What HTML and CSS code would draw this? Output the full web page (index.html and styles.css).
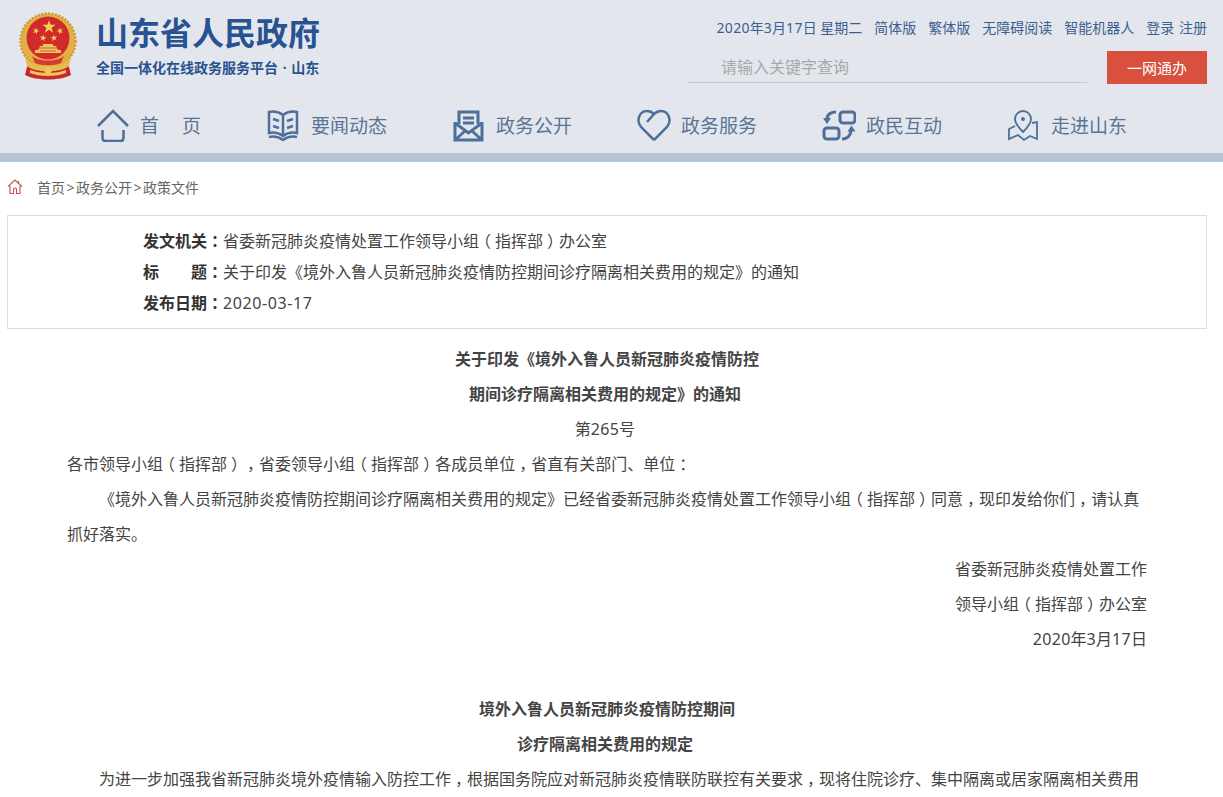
FILE: index.html
```html
<!DOCTYPE html>
<html>
<head>
    <meta charset="utf-8">
    <title>山东省人民政府</title>
    <link rel="stylesheet" href="styles.css">
</head>
<body>
    <div class="header">
        <div class="top">
            <div class="logo">
                <svg class="emblem" width="64" height="70" viewBox="0 0 64 70">
                    <defs>
                        <path id="star" d="M0-1 .224-.309H.951L.363.118 .588.809 0 .382-.588.809-.363.118-.951-.309H-.224Z"/>
                    </defs>
                    <path d="M12 52C20 60 44 60 52 52L55 64C44 70 20 70 9 64Z" fill="#c8282c"/>
                    <circle cx="32" cy="30" r="27.500" fill="#e2b044" stroke="#cf9a34" stroke-width="2.500" stroke-dasharray="2 1.500"/>
                    <circle cx="32" cy="27" r="21.500" fill="#d02a2c"/>
                    <g fill="#f6d25c">
                        <use href="#star" transform="translate(33 16) scale(7)"/>
                        <use href="#star" transform="translate(20 20) rotate(20) scale(3.500)"/>
                        <use href="#star" transform="translate(44 20) rotate(-20) scale(3.500)"/>
                        <use href="#star" transform="translate(27 27) rotate(10) scale(3.500)"/>
                        <use href="#star" transform="translate(38 27) rotate(-10) scale(3.500)"/>
                    </g>
                    <path d="M27 33h10v2h3l2 4h3v3H19v-3h3l2-4h3z" fill="#efc65e"/>
                    <path d="M22 37h20M24 40h16" stroke="#c8282c" stroke-width=".7"/>
                    <path d="M9 46c6 12 40 12 46 0l-2 9c-8 7-34 7-42 0z" fill="#e8bb4e"/>
                    <path d="M16 45c6 6 26 6 32 0l-3 7c-6 3-20 3-26 0z" fill="#d9383a"/>
                    <path d="M14 59c10 4 26 4 36 0v3c-10 4-26 4-36 0z" fill="#efc65e"/>
                    <circle cx="32" cy="60" r="3.500" fill="#efc65e"/>
                </svg>
                <div class="logo-text">
                    <div class="site-name">山东省人民政府</div>
                    <div class="site-sub">全国一体化在线政务服务平台 · 山东</div>
                </div>
            </div>
            <div class="top-right">
                <div class="top-links">
                    <span><span class="num">2020</span>年<span class="num">3</span>月<span class="num">17</span>日 星期二</span>
                    <a>简体版</a>
                    <a>繁体版</a>
                    <a>无障碍阅读</a>
                    <a>智能机器人</a>
                    <span class="login"><a>登录</a> <a>注册</a></span>
                </div>
                <div class="search-row">
                    <div class="search">请输入关键字查询</div>
                    <a class="search-btn">一网通办</a>
                </div>
            </div>
        </div>
        <div class="nav">
            <a class="nav-item first">
                <svg width="34" height="34" viewBox="0 0 34 34"><path d="M2 18L17 3l15 15M6.500 22v8q0 3 3 3h15q3 0 3-3v-8"/></svg>
                <span class="nav-spread"><i>首</i><i>页</i></span>
            </a>
            <a class="nav-item">
                <svg width="34" height="34" viewBox="0 0 34 34"><path d="M16 7C12 4 7 3 2 4v21c5-1 10 0 14 3 4-3 9-4 14-3V4C25 3 20 4 16 7zM16 7v21M6 11l6 2M6 18l6 2M26 11l-6 2M26 18l-6 2M2 29c5-1 10 0 14 3 4-3 9-4 14-3"/></svg>
                <span>要闻动态</span>
            </a>
            <a class="nav-item">
                <svg width="34" height="34" viewBox="0 0 34 34"><path class="thick" d="M7 16V4h19v12M11 10h11M11 15h11M3 14v18h27V14M3 15l13.500 10L30 15M3 32l10-9M30 32l-10-9"/></svg>
                <span>政务公开</span>
            </a>
            <a class="nav-item">
                <svg width="34" height="34" viewBox="0 0 34 34"><path d="M17 32L4 19C-1 13 2 3 10 3c3 0 5 1 7 3l-7 8M17 6c2-2 4-3 7-3 8 0 11 10 6 16L17 32"/></svg>
                <span>政务服务</span>
            </a>
            <a class="nav-item">
                <svg width="34" height="34" viewBox="0 0 34 34">
                    <rect class="thick" x="18" y="4" width="15" height="11" rx="3"/>
                    <rect class="thick" x="2" y="20" width="15" height="11" rx="3"/>
                    <path class="thick" d="M14 4C9 4 6 6 5 10M20 31c5 0 8-2 9-8"/>
                    <path class="solid" d="M1 10h8l-4 6zM25.500 23.500h8l-4-6z"/>
                </svg>
                <span>政民互动</span>
            </a>
            <a class="nav-item">
                <svg width="34" height="34" viewBox="0 0 34 34"><path class="thin" d="M16 24c-5-5-8-9-8-13a8 8 0 0 1 16 0c0 4-3 8-8 13zM8 18l-6 3v10l9-4 6 5 6-4 7 3V14l-5 1"/><circle cx="16" cy="11" r="2" class="solid"/></svg>
                <span>走进山东</span>
            </a>
        </div>
    </div>

    <div class="crumbs">
        <svg width="16" height="16" viewBox="0 0 16 16"><path d="M1 7.500L8 1l7 6.500M11.500 4V2M3 7v7.500h3.500V10.500a1.500 1.500 0 0 1 3 0v4H13V7"/></svg>
        <span>首页<span class="sep">&gt;</span>政务公开<span class="sep">&gt;</span>政策文件</span>
    </div>

    <div class="meta">
        <div class="meta-row"><b>发文机关<span class="pn">：</span></b>省委新冠肺炎疫情处置工作领导小组<span class="pn">（</span>指挥部<span class="pn">）</span>办公室</div>
        <div class="meta-row"><b class="spread"><i>标</i><i>题<span class="pn">：</span></i></b>关于印发《境外入鲁人员新冠肺炎疫情防控期间诊疗隔离相关费用的规定》的通知</div>
        <div class="meta-row"><b>发布日期<span class="pn">：</span></b><span class="meta-date">2020-03-17</span></div>
    </div>

    <div class="article">
        <p class="center"><b>关于印发《境外入鲁人员新冠肺炎疫情防控</b></p>
        <p class="center"><b>期间诊疗隔离相关费用的规定》的通知</b>&nbsp;</p>
        <p class="center">第<span class="num">265</span>号&nbsp;</p>
        <p>各市领导小组<span class="pn">（</span>指挥部<span class="pn">）</span><span class="pn">，</span>省委领导小组<span class="pn">（</span>指挥部<span class="pn">）</span>各成员单位<span class="pn">，</span>省直有关部门、单位<span class="pn">：</span></p>
        <p class="indent">《境外入鲁人员新冠肺炎疫情防控期间诊疗隔离相关费用的规定》已经省委新冠肺炎疫情处置工作领导小组<span class="pn">（</span>指挥部<span class="pn">）</span>同意<span class="pn">，</span>现印发给你们<span class="pn">，</span>请认真<br>抓好落实。</p>
        <p class="right">省委新冠肺炎疫情处置工作</p>
        <p class="right">领导小组<span class="pn">（</span>指挥部<span class="pn">）</span>办公室</p>
        <p class="right"><span class="num">2020</span>年<span class="num">3</span>月<span class="num">17</span>日</p>
        <p>&nbsp;</p>
        <p class="center"><b>境外入鲁人员新冠肺炎疫情防控期间</b></p>
        <p class="center"><b>诊疗隔离相关费用的规定</b>&nbsp;</p>
        <p class="indent">为进一步加强我省新冠肺炎境外疫情输入防控工作<span class="pn">，</span>根据国务院应对新冠肺炎疫情联防联控有关要求<span class="pn">，</span>现将住院诊疗、集中隔离或居家隔离相关费用</p>
    </div>
</body>
</html>
```

FILE: styles.css
```css
html, body {
    height: 797px;
    overflow: hidden;
}
body {
    margin: 0;
    font-family: "Noto Sans", "Noto Sans CJK SC", sans-serif;
    color: #444;
    background: #fff;
}
a {
    color: inherit;
    text-decoration: none;
}
i {
    font-style: normal;
}
.header {
    height: 153px;
    background: #e3e7ed;
    border-bottom: 9px solid #b4c5d8;
}
.top {
    display: flex;
    justify-content: space-between;
    padding: 11px 16px 0 16px;
}
.logo {
    display: flex;
}
.logo-text {
    margin-left: 16px;
}
.site-name {
    margin-top: 3px;
    font-size: 32px;
    line-height: 38px;
    font-weight: bold;
    color: #285291;
}
.site-sub {
    margin-top: 7px;
    font-size: 14px;
    line-height: 18px;
    font-weight: bold;
    word-spacing: 1px;
    color: #285291;
}
.top-right {
    width: 520px;
}
.top-links {
    display: flex;
    justify-content: flex-end;
    gap: 12px;
    margin-top: 7px;
    font-size: 14px;
    line-height: 20px;
    color: #3d5f8f;
}
.login {
    word-spacing: 1px;
}
.num {
    letter-spacing: 0.3px;
}
.search-row {
    display: flex;
    justify-content: space-between;
    margin-top: 13px;
}
.search {
    width: 366px;
    height: 31px;
    padding-left: 34px;
    border-bottom: 1px solid #c4cad4;
    font-size: 16px;
    line-height: 32px;
    color: #a9a9a9;
}
.search-btn {
    width: 100px;
    height: 33px;
    background: #d9503f;
    color: #fff;
    font-size: 15px;
    line-height: 35px;
    text-align: center;
}
.nav {
    display: flex;
    padding: 24px 0 0 96px;
}
.nav-item {
    display: flex;
    align-items: center;
    width: 185px;
    font-size: 19px;
    color: #5a7494;
}
.nav-item.first {
    width: 171px;
}
.nav-spread {
    display: flex;
    justify-content: space-between;
    width: 61px;
}
.nav-item svg {
    flex: none;
    margin-right: 10px;
    fill: none;
    stroke: #4d6f99;
    stroke-width: 2.500;
}
.nav-item .thick {
    stroke-width: 3;
}
.nav-item .thin {
    stroke-width: 1.800;
}
.nav-item .solid {
    fill: #4d6f99;
    stroke: none;
}
.crumbs {
    display: flex;
    align-items: center;
    height: 49px;
    padding: 0 0 4px 7px;
    font-size: 14px;
    color: #666;
}
.crumbs svg {
    margin-right: 14px;
    fill: none;
    stroke: #c0504d;
    stroke-width: 1.100;
}
.sep {
    margin: 0 1.500px;
}
.meta {
    margin: 0 16px 0 7px;
    padding: 10px 0 9px 135px;
    border: 1px solid #ddd;
    font-size: 16px;
    line-height: 31px;
}
.meta b {
    color: #333;
}
.meta-date {
    letter-spacing: 0.6px;
}
.spread {
    display: inline-flex;
    justify-content: space-between;
    width: 80px;
}
/* full-width punctuation sits centred in the reference font */
.pn {
    padding: 0 4px;
    font-feature-settings: "halt";
}
.article {
    padding: 13px 76px 0 67px;
    font-size: 16px;
    line-height: 35px;
}
.article p {
    margin: 0;
}
.center {
    text-align: center;
}
.right {
    text-align: right;
}
.indent {
    text-indent: 32px;
}
```
